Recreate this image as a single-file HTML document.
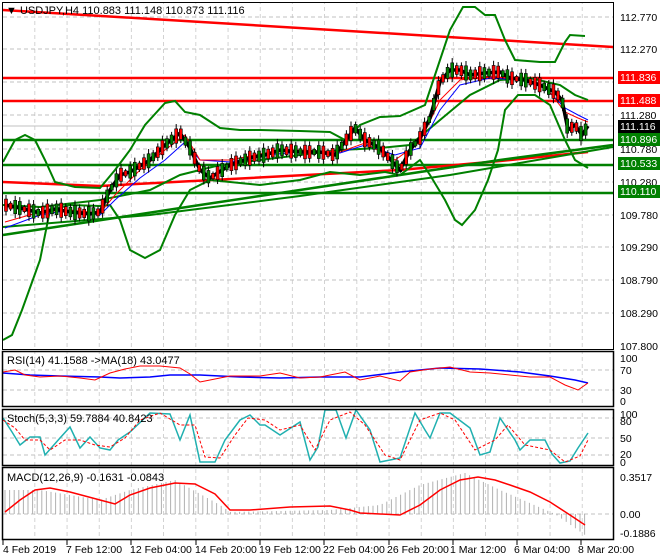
<!DOCTYPE html>
<html><head><meta charset="utf-8"><style>
body{margin:0;background:#fff;width:660px;height:560px;overflow:hidden}
svg{display:block;font-family:"Liberation Sans",sans-serif;font-size:11px}
</style></head><body>
<svg width="660" height="560" viewBox="0 0 660 560" xmlns="http://www.w3.org/2000/svg">
<defs>
<pattern id="gv" x="3" y="0" width="32.2" height="560" patternUnits="userSpaceOnUse"><line x1="32" y1="0" x2="32" y2="560" stroke="#c0c0c0" stroke-dasharray="4,3"/></pattern>
</defs>
<rect width="660" height="560" fill="#fff"/>
<!-- grids -->
<rect x="3" y="3" width="610" height="346" fill="url(#gv)"/>
<rect x="3" y="352" width="610" height="54" fill="url(#gv)"/>
<rect x="3" y="410" width="610" height="55" fill="url(#gv)"/>
<rect x="3" y="469" width="610" height="70" fill="url(#gv)"/>
<g stroke="#c0c0c0" stroke-dasharray="4,3">
<line x1="3" x2="613" y1="17" y2="17"/><line x1="3" x2="613" y1="49" y2="49"/><line x1="3" x2="613" y1="82" y2="82"/><line x1="3" x2="613" y1="115" y2="115"/><line x1="3" x2="613" y1="149" y2="149"/><line x1="3" x2="613" y1="182" y2="182"/><line x1="3" x2="613" y1="215" y2="215"/><line x1="3" x2="613" y1="247" y2="247"/><line x1="3" x2="613" y1="280" y2="280"/><line x1="3" x2="613" y1="313" y2="313"/>
<line x1="3" x2="613" y1="370" y2="370"/><line x1="3" x2="613" y1="390" y2="390"/>
<line x1="3" x2="613" y1="418" y2="418"/><line x1="3" x2="613" y1="438" y2="438"/><line x1="3" x2="613" y1="455" y2="455"/>
<line x1="3" x2="613" y1="514" y2="514"/>
</g>
<line x1="3" x2="613" y1="126" y2="126" stroke="#c0c0c0"/>
<!-- levels -->
<g stroke-width="2.5" fill="none">
<line x1="3" y1="10" x2="613" y2="47" stroke="#f00"/>
<line x1="3" y1="78" x2="613" y2="78" stroke="#f00"/>
<line x1="3" y1="101" x2="613" y2="101" stroke="#f00"/>
<line x1="3" y1="140" x2="613" y2="140" stroke="#008000"/>
<line x1="3" y1="165" x2="613" y2="165" stroke="#008000"/>
<line x1="3" y1="193" x2="613" y2="193" stroke="#008000"/>
<polyline points="3,182 100,186 250,178 400,170 500,161 588,152" stroke="#f00"/>
<polyline points="3,235 200,205 400,175 500,160 613,145" stroke="#008000"/>
<polyline points="3,227 150,215 300,196 450,175 613,147" stroke="#008000" stroke-width="2"/>
<!-- bollinger -->
<polyline points="3,162 15,140 25,135 35,140 45,160 55,182 75,187 100,188 115,170 130,150 145,125 165,103 175,101 185,112 200,115 220,128 240,130 260,130 300,131 330,132 345,140 360,125 380,117 400,116 425,105 440,60 450,30 463,7 475,7 485,15 495,15 505,40 515,60 540,62 555,62 565,42 570,35 585,36" stroke="#008000" stroke-width="2"/>
<polyline points="3,340 12,335 22,310 40,260 50,210 70,205 100,206 110,205 120,220 130,250 145,258 160,250 175,215 190,190 210,180 260,185 300,180 330,172 360,175 385,172 400,175 420,160 430,175 445,200 455,220 462,225 475,210 488,180 498,150 505,110 518,95 535,95 550,105 565,140 575,160 588,168" stroke="#008000" stroke-width="2"/>
<polyline points="3,205 40,207 100,200 150,190 180,175 220,165 260,160 300,155 340,150 380,148 410,145 440,120 470,95 500,80 530,78 560,85 575,95 588,100" stroke="#008000" stroke-width="2"/>
</g>
<!-- MAs -->
<polyline points="5,228 40,215 70,210 100,215 115,200 140,178 165,160 185,142 200,160 230,162 265,155 300,152 340,153 365,145 395,155 420,148 440,110 460,85 490,78 520,80 545,88 565,108 578,115 588,120" fill="none" stroke="#00f" stroke-width="1"/>
<polyline points="5,222 40,212 70,210 100,213 115,195 140,170 165,150 185,135 200,160 230,160 265,153 300,150 340,152 365,143 395,160 420,142 440,100 460,80 490,76 520,80 545,86 565,112 578,118 588,122" fill="none" stroke="#f00" stroke-width="1"/>
<!-- price -->
<polyline points="5,205 20,208 40,213 55,209 70,212 90,214 100,212 110,190 120,175 130,172 150,160 165,145 180,133 190,148 200,170 210,178 230,165 250,158 265,155 280,150 300,152 320,152 335,155 355,128 365,140 380,148 400,170 410,150 420,138 430,118 440,82 450,70 460,70 470,75 485,73 500,72 510,78 525,80 540,85 555,92 562,100 568,130 575,125 582,135 588,126" fill="none" stroke="#000" stroke-width="3.5"/>
<g id="candles"></g>
<!-- header -->
<text x="6" y="14" font-size="11">▼ USDJPY,H4  110.883 111.148 110.873 111.116</text>
<!-- RSI -->
<polyline points="3,373 30,375 60,376 100,377 120,378 150,377 170,375 200,375 240,377 280,378 320,377 360,377 400,372 440,368 480,369 520,372 550,376 575,380 588,383" fill="none" stroke="#00f" stroke-width="1.5"/>
<polyline points="3,372 15,370 25,375 40,377 60,376 80,378 95,380 110,373 125,369 140,366 160,366 180,368 190,374 200,382 210,380 230,376 260,376 280,373 300,378 320,377 345,372 360,380 380,376 400,381 410,372 430,369 450,367 470,372 490,373 510,375 530,377 550,377 565,385 578,390 588,383" fill="none" stroke="#f00" stroke-width="1"/>
<text x="7" y="364">RSI(14) 41.1588  -&gt;MA(18) 43.0477</text>
<!-- Stoch -->
<polyline points="3,418 12,432 20,445 30,437 40,437 45,455 60,438 70,427 80,448 90,437 100,448 110,450 118,440 130,432 150,413 170,414 180,440 190,415 200,462 215,462 225,440 240,420 250,415 260,425 265,425 280,435 300,422 310,460 318,447 325,410 336,410 346,438 356,410 370,430 380,462 390,460 400,458 415,413 425,430 430,438 440,413 450,413 470,428 480,455 490,452 500,418 515,440 520,450 530,440 545,440 552,454 560,463 570,461 578,448 588,433" fill="none" stroke="#20b0b0" stroke-width="1.5"/>
<polyline points="3,420 15,428 25,440 40,440 50,450 65,440 80,440 95,445 110,447 125,438 140,420 160,413 180,425 195,425 205,457 220,458 235,435 248,418 265,420 280,430 300,425 315,450 330,420 350,412 365,425 385,455 400,460 420,420 440,413 455,420 475,450 495,440 508,425 525,445 550,450 565,462 580,456 588,440" fill="none" stroke="#f00" stroke-width="1" stroke-dasharray="3,2"/>
<text x="7" y="422">Stoch(5,3,3) 59.7884 40.8423</text>
<!-- MACD hist -->
<g id="hist" stroke="#b0b0b0" stroke-width="1"></g>
<polyline points="5,512 20,500 35,490 50,488 70,492 100,500 115,504 130,495 150,488 175,483 195,484 215,494 230,510 250,510 290,507 330,506 350,510 360,513 380,514 400,515 420,505 440,490 460,480 478,477 495,480 510,485 530,492 550,502 570,515 585,525" fill="none" stroke="#f00" stroke-width="1.5"/>
<text x="7" y="481">MACD(12,26,9) -0.1631 -0.0843</text>
<!-- panel borders -->
<g fill="none" stroke="#000">
<rect x="2.5" y="2.5" width="611" height="347"/>
<rect x="2.5" y="351.5" width="611" height="55" stroke-width="1.5"/>
<rect x="2.5" y="409.5" width="611" height="56" stroke-width="1.5"/>
<rect x="2.5" y="467.5" width="611" height="72" stroke-width="1.5"/>
</g>
<!-- right axis -->
<g font-size="10.5" fill="#000">
<text x="620" y="21">112.770</text><text x="620" y="53">112.270</text><text x="620" y="119">111.280</text><text x="620" y="153">110.780</text><text x="620" y="186">110.280</text><text x="620" y="219">109.780</text><text x="620" y="251">109.290</text><text x="620" y="284">108.790</text><text x="620" y="317">108.290</text><text x="620" y="350">107.800</text>
<text x="620" y="362">100</text><text x="620" y="374">70</text><text x="620" y="394">30</text><text x="620" y="405">0</text>
<text x="620" y="418">100</text><text x="620" y="425">80</text><text x="620" y="442">50</text><text x="620" y="458">20</text><text x="620" y="466">0</text>
<text x="620" y="481">0.3517</text><text x="620" y="518">0.00</text><text x="620" y="537">-0.1886</text>
</g>
<rect x="618" y="71" width="42" height="13" fill="#f00"/><text x="620" y="81" fill="#fff" font-size="10.5">111.836</text>
<rect x="618" y="94" width="42" height="13" fill="#f00"/><text x="620" y="104" fill="#fff" font-size="10.5">111.488</text>
<rect x="618" y="120" width="42" height="13" fill="#000"/><text x="620" y="130" fill="#fff" font-size="10.5">111.116</text>
<rect x="618" y="133" width="42" height="13" fill="#008000"/><text x="620" y="143" fill="#fff" font-size="10.5">110.896</text>
<rect x="618" y="157" width="42" height="13" fill="#008000"/><text x="620" y="167" fill="#fff" font-size="10.5">110.533</text>
<rect x="618" y="185" width="42" height="13" fill="#008000"/><text x="620" y="195" fill="#fff" font-size="10.5">110.110</text>
<!-- time axis -->
<g stroke="#000"><line x1="3" y1="540" x2="3" y2="545"/><line x1="67" y1="540" x2="67" y2="545"/><line x1="131" y1="540" x2="131" y2="545"/><line x1="196" y1="540" x2="196" y2="545"/><line x1="260" y1="540" x2="260" y2="545"/><line x1="324" y1="540" x2="324" y2="545"/><line x1="389" y1="540" x2="389" y2="545"/><line x1="453" y1="540" x2="453" y2="545"/><line x1="517" y1="540" x2="517" y2="545"/><line x1="581" y1="540" x2="581" y2="545"/></g>
<g font-size="10.5"><text x="3" y="553">4 Feb 2019</text><text x="66" y="553">7 Feb 12:00</text><text x="130" y="553">12 Feb 04:00</text><text x="195" y="553">14 Feb 20:00</text><text x="259" y="553">19 Feb 12:00</text><text x="323" y="553">22 Feb 04:00</text><text x="387" y="553">26 Feb 20:00</text><text x="450" y="553">1 Mar 12:00</text><text x="514" y="553">6 Mar 04:00</text><text x="578" y="553">8 Mar 20:00</text></g>
</svg>
<script>
(function(){
var ns="http://www.w3.org/2000/svg";
var pts=[[5,205],[20,208],[40,213],[55,209],[70,212],[90,214],[100,212],[110,190],[120,175],[130,172],[150,160],[165,145],[180,133],[190,148],[200,170],[210,178],[230,165],[250,158],[265,155],[280,150],[300,152],[320,152],[335,155],[355,128],[365,140],[380,148],[400,170],[410,150],[420,138],[430,118],[440,82],[450,70],[460,70],[470,75],[485,73],[500,72],[510,78],[525,80],[540,85],[555,92],[562,100],[568,130],[575,125],[582,135],[588,126]];
function yAt(x){for(var i=1;i<pts.length;i++){if(x<=pts[i][0]){var a=pts[i-1],b=pts[i];return a[1]+(b[1]-a[1])*(x-a[0])/(b[0]-a[0]);}}return pts[pts.length-1][1];}
var g=document.getElementById("candles");
for(var x=6;x<=588;x+=4.6){var y=yAt(x),up=Math.sin(x*1.7)>0,h=4+Math.abs(Math.sin(x*0.9))*8;
var l=document.createElementNS(ns,"line");l.setAttribute("x1",x);l.setAttribute("x2",x);l.setAttribute("y1",y-h);l.setAttribute("y2",y+h);l.setAttribute("stroke","#000");g.appendChild(l);
var r=document.createElementNS(ns,"rect");r.setAttribute("x",x-1.5);r.setAttribute("y",y-h*0.6);r.setAttribute("width",3);r.setAttribute("height",h*1.2);r.setAttribute("fill",up?"#008000":"#f00");r.setAttribute("stroke","#000");r.setAttribute("stroke-width","0.6");g.appendChild(r);}
var hp=[[5,490],[40,490],[100,500],[130,490],[175,480],[220,505],[230,512],[330,510],[380,505],[420,485],[465,473],[500,490],[555,514],[585,535]];
function hy(x){for(var i=1;i<hp.length;i++){if(x<=hp[i][0]){var a=hp[i-1],b=hp[i];return a[1]+(b[1]-a[1])*(x-a[0])/(b[0]-a[0]);}}return 535;}
var hg=document.getElementById("hist");
for(var x=5;x<=588;x+=4.6){var l=document.createElementNS(ns,"line");l.setAttribute("x1",x);l.setAttribute("x2",x);l.setAttribute("y1",514);l.setAttribute("y2",hy(x));hg.appendChild(l);}
})();
</script>
</body></html>
